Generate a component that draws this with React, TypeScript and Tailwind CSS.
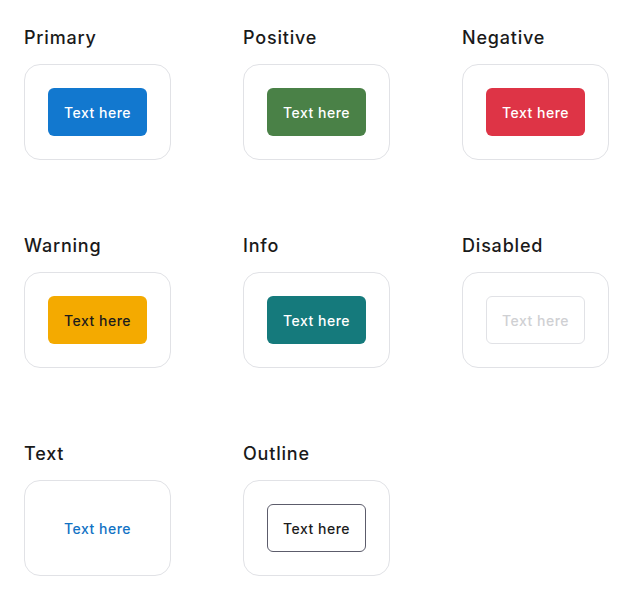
const variants = [
  { label: "Primary", btn: "bg-[#1278cf] text-white" },
  { label: "Positive", btn: "bg-[#4a8147] text-white" },
  { label: "Negative", btn: "bg-[#de3446] text-white" },
  { label: "Warning", btn: "bg-[#f4aa00] text-[#1c1c1c]" },
  { label: "Info", btn: "bg-[#157a7c] text-white" },
  { label: "Disabled", btn: "bg-white border border-[#e1e2e6] text-[#cfd0d3]" },
  { label: "Text", btn: "bg-transparent text-[#1272c4]" },
  { label: "Outline", btn: "bg-white border border-[#5c5c6b] text-[#1c1c1c]" },
];

function App() {
  return (
    <div
      className="min-h-screen bg-white pl-6 pt-[26px]"
      style={{ fontFamily: "Inter, 'Open Sans', sans-serif" }}
    >
      <div className="grid grid-cols-[147px_147px_147px] gap-x-[72px] gap-y-[74px]">
        {variants.map((v) => (
          <div key={v.label} className="flex flex-col gap-[14px]">
            <h2 className="text-[18px] leading-6 font-medium tracking-[0.8px] text-[#1a1a1a]">
              {v.label}
            </h2>
            <div className="h-24 rounded-2xl border border-[#e1e2e6] flex items-center justify-center">
              <button
                className={`w-[99px] h-12 rounded-md text-[14px] font-medium tracking-[0.5px] ${v.btn}`}
              >
                Text here
              </button>
            </div>
          </div>
        ))}
      </div>
    </div>
  );
}

export default App;
